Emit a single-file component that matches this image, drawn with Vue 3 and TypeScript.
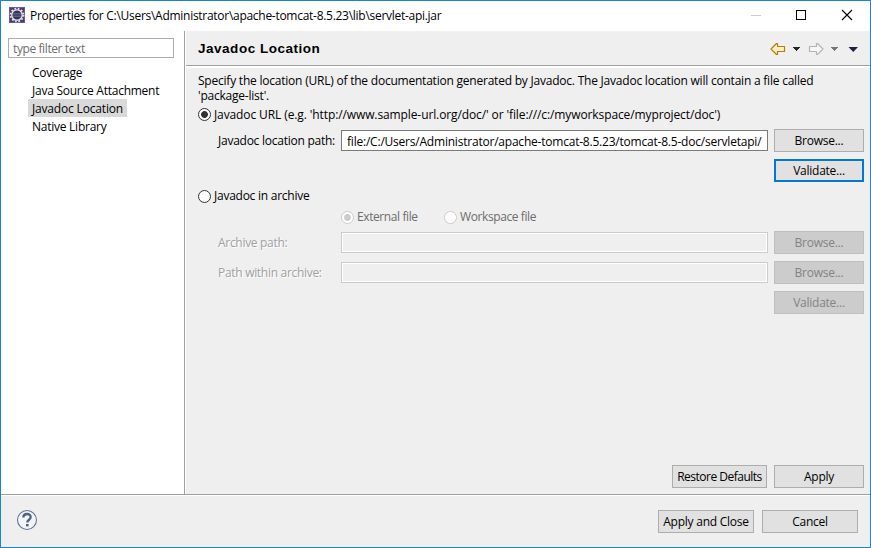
<script setup lang="ts">
import { ref } from 'vue'

const pages = ['Coverage', 'Java Source Attachment', 'Javadoc Location', 'Native Library']
const selected = ref('Javadoc Location')
const filter = ref('')
const source = ref<'url' | 'archive'>('url')
const path = ref('file:/C:/Users/Administrator/apache-tomcat-8.5.23/tomcat-8.5-doc/servletapi/')
</script>

<template>
  <div class="window">
    <header class="titlebar">
      <svg class="app-icon" width="16" height="16" viewBox="0 0 16 16">
        <rect width="16" height="16" fill="#4b3a78" />
        <rect x="0.5" y="0.5" width="15" height="15" fill="none" stroke="#6d5b92" />
        <circle cx="8" cy="8" r="6.4" fill="none" stroke="#e6e3ea" stroke-width="1.8" stroke-dasharray="1.7 1.65" />
        <circle cx="8" cy="8" r="5.2" fill="#33344f" stroke="#e9e7ec" stroke-width="1.3" />
        <path d="M4.2 6.5h7.6M3.8 8h8.4M4.2 9.5h7.6" stroke="#71749b" stroke-width="0.7" />
      </svg>
      <span class="title">Properties for C:\Users\Administrator\apache-tomcat-8.5.23\lib\servlet-api.jar</span>
      <svg class="caption" width="103" height="12" viewBox="0 0 103 12">
        <path d="M0 6.5h10" stroke="#cbcbcb" fill="none" />
        <rect x="45.5" y="1.5" width="9" height="9" stroke="#000" fill="none" />
        <path d="M91 1l10 10M101 1L91 11" stroke="#000" stroke-width="1.1" fill="none" />
      </svg>
    </header>

    <div class="main">
      <aside class="sidebar">
        <input v-model="filter" class="filter" placeholder="type filter text" />
        <ul class="tree">
          <li v-for="p in pages" :key="p">
            <span :class="['node', { active: p === selected }]" @click="selected = p">{{ p }}</span>
          </li>
        </ul>
      </aside>

      <section class="page">
        <div class="page-head">
          <h1>Javadoc Location</h1>
          <svg class="nav" width="90" height="14" viewBox="0 0 90 14">
            <defs>
              <linearGradient id="gold" x1="0" y1="0" x2="0" y2="1">
                <stop offset="0" stop-color="#fffbe4" />
                <stop offset="1" stop-color="#ffe9a3" />
              </linearGradient>
            </defs>
            <path d="M1 7L6.500 1.500H7.500V4.500H14.500V9.500H7.500V12.500H6.500Z" fill="url(#gold)" stroke="#bb7b0b" stroke-width="1.2" stroke-linejoin="round" />
            <path d="M23 5h7v1h-1v1h-1v1h-1v1h-1V8h-1V7h-1V6h-1z" fill="#262626" />
            <path d="M53 7L47.500 1.500H46.500V4.500H39.500V9.500H46.500V12.500H47.500Z" fill="#f7f7f7" stroke="#b4b4b4" stroke-width="1.2" stroke-linejoin="round" />
            <path d="M61 5h7v1h-1v1h-1v1h-1v1h-1V8h-1V7h-1V6h-1z" fill="#777" />
            <path d="M78.500 5h9.500l-4.750 5z" fill="#2b1a42" />
          </svg>
        </div>

        <div class="content">
          <p class="intro">
            <span class="line">Specify the location (URL) of the documentation generated by Javadoc. The Javadoc location will contain a file called</span>
            <span class="line">'package-list'.</span>
          </p>
          <label class="radio-row url-row" @click="source = 'url'">
            <span :class="['radio', { on: source === 'url' }]"></span>
            <span class="url-text">Javadoc URL (e.g. 'http://www.sample-url.org/doc/' or 'file:///c:/myworkspace/myproject/doc')</span>
          </label>
          <div class="row">
            <span class="label">Javadoc location path:</span>
            <input v-model="path" class="field" />
            <button class="btn">Browse...</button>
          </div>
          <div class="row end"><button class="btn focus">Validate...</button></div>
          <label class="radio-row archive-row" @click="source = 'archive'">
            <span :class="['radio', { on: source === 'archive' }]"></span>
            <span>Javadoc in archive</span>
          </label>
          <div class="kinds">
            <span class="radio off on"></span><span class="kind external">External file</span>
            <span class="radio off"></span><span class="kind">Workspace file</span>
          </div>
          <div class="row">
            <span class="label dim">Archive path:</span>
            <input class="field" disabled />
            <button class="btn" disabled>Browse...</button>
          </div>
          <div class="row">
            <span class="label dim">Path within archive:</span>
            <input class="field" disabled />
            <button class="btn" disabled>Browse...</button>
          </div>
          <div class="row end"><button class="btn" disabled>Validate...</button></div>
          <div class="page-actions">
            <button class="btn restore">Restore Defaults</button>
            <button class="btn">Apply</button>
          </div>
        </div>
      </section>
    </div>

    <footer class="footer">
      <svg class="help" width="22" height="22" viewBox="0 0 22 22">
        <circle cx="11" cy="11" r="9.500" fill="#f3f4f6" stroke="#62749a" stroke-width="1.100" />
        <path d="M7.300 8.600C7.300 3.900 14.700 3.900 14.700 8.100C14.700 10.800 11.300 10.700 11.300 13.600" fill="none" stroke="#536189" stroke-width="2.300" />
        <rect x="10" y="15" width="2.600" height="2.400" fill="#536189" />
      </svg>
      <div class="footer-actions">
        <button class="btn wide">Apply and Close</button>
        <button class="btn wide">Cancel</button>
      </div>
    </footer>
  </div>
</template>

<style>
body {
  margin: 0;
  overflow: hidden;
}
</style>

<style scoped>
.window,
.window * {
  box-sizing: border-box;
}
.window {
  width: 871px;
  height: 548px;
  display: flex;
  flex-direction: column;
  border: 1px solid #1883d7;
  background: #efefef;
  color: #000;
  font: 12px/16px 'Open Sans', 'Noto Sans', sans-serif;
  letter-spacing: -0.25px;
  white-space: nowrap;
}
button,
input {
  font: inherit;
  letter-spacing: inherit;
  color: inherit;
  border-radius: 0;
  outline: none;
  margin: 0;
}
.titlebar {
  height: 30px;
  flex: none;
  display: flex;
  align-items: center;
  padding: 0 16px 2px 8px;
  background: #fff;
}
.title {
  letter-spacing: -0.28px;
  padding-top: 2px;
}
.app-icon {
  margin-right: 5px;
}
.caption {
  margin-left: auto;
}
.main {
  flex: 1;
  display: flex;
  min-height: 0;
}
.sidebar {
  width: 184px;
  padding: 7px 10px 0 7px;
  background: #fff;
  border-right: 1px solid #a0a0a0;
}
.filter {
  display: block;
  width: 166px;
  height: 20px;
  padding: 0 4px;
  border: 1px solid #abadb3;
  background: #fff;
  letter-spacing: -0.4px;
}
.filter::placeholder {
  color: #6d6d6d;
  opacity: 1;
}
.tree {
  list-style: none;
  margin: 5px 0 0 20px;
  padding: 0;
}
.tree li {
  height: 18px;
}
.node {
  display: inline-block;
  height: 18px;
  line-height: 19px;
  padding: 0 4px;
}
.node.active {
  background: #d9d9d9;
  letter-spacing: -0.17px;
}
.page {
  flex: 1;
  display: flex;
  flex-direction: column;
  border-left: 1px solid #fff;
}
.page-head {
  height: 35px;
  flex: none;
  display: flex;
  align-items: center;
  justify-content: space-between;
  padding: 2px 10px 0 12px;
  border-bottom: 1px solid #a0a0a0;
}
h1 {
  margin: 0;
  font: bold 13.5px/16px 'Liberation Sans', Arial, sans-serif;
  letter-spacing: 0.52px;
}
.content {
  flex: 1;
  display: flex;
  flex-direction: column;
  border-top: 2px solid #fff;
  padding: 5px 6px 6px 12px;
}
.intro {
  margin: 0;
  height: 30px;
  line-height: 15px;
  letter-spacing: -0.22px;
}
.line {
  display: block;
}
.radio-row {
  display: flex;
  align-items: center;
  gap: 3px;
  height: 23px;
}
.url-row {
  margin-bottom: 3px;
}
.url-text {
  letter-spacing: -0.107px;
}
.radio {
  width: 13px;
  height: 13px;
  flex: none;
  border: 1px solid #333;
  border-radius: 50%;
  background: #fff;
}
.radio.on {
  background: radial-gradient(circle, #333 3px, #fff 3.800px);
}
.radio.off {
  border-color: #ccc;
}
.radio.off.on {
  background: radial-gradient(circle, #ccc 3px, #fff 3.800px);
}
.row {
  display: grid;
  grid-template-columns: 123px 427px 90px;
  align-items: center;
  height: 23px;
  margin-left: 20px;
  margin-bottom: 7px;
}
.row .btn {
  margin-left: 6px;
}
.row.end {
  justify-content: end;
  grid-template-columns: 96px;
}
.row .label {
  padding-top: 1px;
}
.dim {
  color: #a0a0a0;
  text-shadow: 1px 1px 0 #fff;
  letter-spacing: -0.3px;
}
.field {
  width: 427px;
  height: 21px;
  padding: 1px 2px 0 5px;
  border: 1px solid #7a7a7a;
  background: #fff;
  letter-spacing: -0.215px;
}
.field:disabled {
  border-color: #ccc;
  background: #efefef;
  box-shadow: inset 0 0 0 1px #fff;
}
.btn {
  width: 90px;
  height: 23px;
  padding: 1px 0 0;
  border: 1px solid #adadad;
  background: #e1e1e1;
  text-align: center;
}
.btn.focus {
  border: 2px solid #0078d7;
}
.btn:disabled {
  border-color: #bfbfbf;
  background: #ccc;
  color: #838383;
}
.archive-row {
  height: 14px;
}
.kinds {
  display: flex;
  align-items: center;
  height: 28px;
  margin-left: 143px;
  color: #6d6d6d;
  letter-spacing: -0.4px;
}
.kind {
  margin-left: 3px;
}
.external {
  width: 87px;
}
.page-actions {
  margin-top: auto;
  display: flex;
  justify-content: flex-end;
  gap: 7px;
}
.restore {
  width: 95px;
  letter-spacing: -0.5px;
}
.footer {
  height: 53px;
  flex: none;
  display: flex;
  align-items: center;
  justify-content: space-between;
  padding: 0 12px 0 15px;
  border-top: 1px solid #a0a0a0;
  box-shadow: inset 0 1px #fff;
}
.help {
  margin-bottom: 2px;
}
.footer-actions {
  display: flex;
  gap: 8px;
}
.wide {
  width: 96px;
}
</style>
